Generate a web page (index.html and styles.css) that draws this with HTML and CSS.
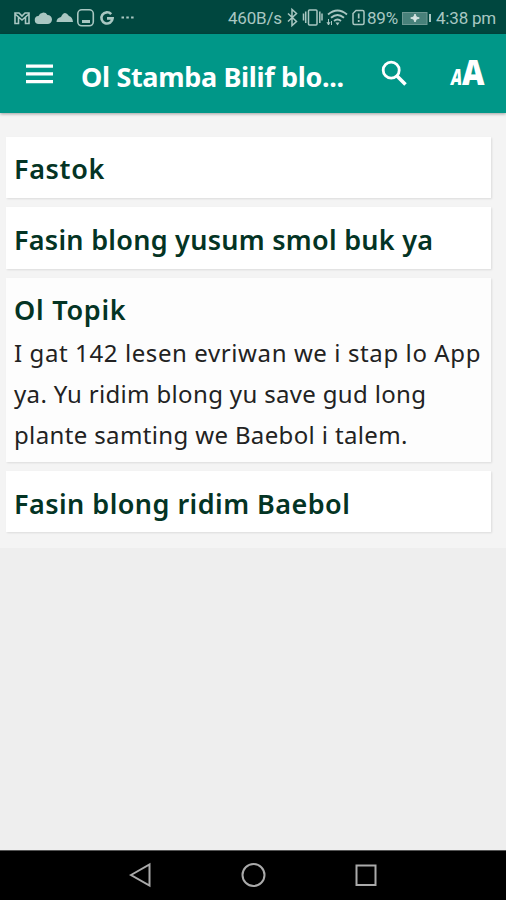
FILE: index.html
```html
<!DOCTYPE html>
<html lang="bi">
<head>
<meta charset="utf-8">
<title>Ol Stamba Bilif</title>
<link rel="stylesheet" href="styles.css">
</head>
<body>
<div class="status">
  <svg class="notices" width="124" height="34" viewBox="14 0 124 34" fill="none" stroke="#a9c7c2" stroke-width="1.6">
    <path d="M15 13h4l3 3 3-3h4v10.500h-3.500v-6.500l-3.500 3-3.500-3v6.500h-3.500zM15 14l7 6 7-6"/>
    <path d="M39 24a4 4 0 0 1-.5-8a5 5 0 0 1 9-1a4.500 4.500 0 0 1 0 9z" fill="#a9c7c2" stroke="none"/>
    <path d="M56.500 22q0-4 4.500-5q3.500-7.500 8-1q3.500 1 4 6z" fill="#a9c7c2" stroke="none"/>
    <rect x="77.800" y="9.800" width="15.500" height="16" rx="4"/>
    <path d="M82 21.500h8" stroke-width="3"/>
    <path d="M111.200 14.200a5.600 5.600 0 1 0 1.400 4.200h-5.600" stroke-width="2.600"/>
    <path d="M121.500 17.500h2.500M126.300 17.500h2.500M131.100 17.500h2.500" stroke-width="2"/>
  </svg>
  <span class="speed">460B/s</span>
  <svg class="signals" width="80" height="34" viewBox="286 0 80 34" fill="none" stroke="#a9c7c2" stroke-width="1.500">
    <path d="M288 13.500l8.500 8-4.500 4v-16l4.500 4-8.500 8"/>
    <rect x="308.500" y="10" width="8.500" height="15" rx="1"/>
    <path d="M305.700 11.500v11.500M319.800 11.500v11.500M303.500 13.500v7M322 13.500v7"/>
    <path d="M328 14.500q9.500-8 19 0M331 17.800q6.500-5.500 13 0M334 21q3.500-3 7 0" stroke-width="1.800"/>
    <path d="M335.500 22.500h4l-2 3z" fill="#a9c7c2" stroke="none"/>
    <path d="M328.500 25v-6M331.500 25v-4M327 22l1.500 3 1.500-3" stroke-width="1"/>
    <path d="M356 10.500h6.500q1.500 0 1.500 1.500v11q0 1.500-1.500 1.500h-8q-1.500 0-1.500-1.500v-9.500z"/>
    <path d="M358.700 13.500v5M358.700 20v2" stroke-width="1.700"/>
  </svg>
  <span class="percent">89%</span>
  <svg class="battery" width="30" height="34" viewBox="402 0 30 34">
    <rect x="402.500" y="12.500" width="24.500" height="12" fill="#48817a" stroke="#6d9993"/>
    <path d="M429 14h2v8h-2z" fill="#a9c7c2"/>
    <path d="M415 14l1.300 3 3 1-3 1.200-1.300 2.800-1.300-2.800-3-1.200 3-1z" fill="#d6e5e2" stroke="#d6e5e2"/>
  </svg>
  <span class="time">4:38 pm</span>
</div>
<header class="bar">
  <svg class="menu" width="27" height="20" viewBox="0 0 27 20" fill="#fff"><path d="M0 .5h27v3.300H0zM0 8.200h27v3.300H0zM0 16h27v3.300H0z"/></svg>
  <h1 class="title">Ol Stamba Bilif blo...</h1>
  <svg class="search" width="27" height="27" viewBox="0 0 27 27" fill="none" stroke="#fff" stroke-width="2.800"><circle cx="10.200" cy="10.200" r="8"/><path d="M16 16l8.500 8.500" stroke-width="3.500"/></svg>
  <div class="sizes"><span class="small">A</span><span class="large">A</span></div>
</header>
<main class="list">
  <section class="card"><h2><span class="h-a">Fastok</span></h2></section>
  <section class="card second"><h2><span class="h-b">Fasin blong yusum smol buk ya</span></h2></section>
  <section class="card topic">
    <h2><span class="h-c">Ol Topik</span></h2>
    <p><span class="l-a">I gat 142 lesen evriwan we i stap lo App</span><br><span class="l-b">ya. Yu ridim blong yu save gud long</span><br><span class="l-c">plante samting we Baebol i talem.</span></p>
  </section>
  <section class="card last"><h2><span class="h-d">Fasin blong ridim Baebol</span></h2></section>
</main>
<nav class="nav">
  <svg width="260" height="49" viewBox="124 851 260 49" fill="none" stroke="#aaa" stroke-width="2"><path d="M132 875l18.500-10.500v21z"/><circle cx="254.500" cy="875" r="11"/><rect x="357.500" y="865.500" width="19" height="19.500"/></svg>
</nav>
</body>
</html>
```
FILE: styles.css
```css
* { box-sizing: border-box; }
body {
  margin: 0;
  height: 900px;
  display: flex;
  flex-direction: column;
  background: #eee;
  font-family: "Noto Sans", sans-serif;
  overflow: hidden;
}
svg { display: block; flex: none; }
.status {
  flex: none;
  height: 34px;
  display: flex;
  align-items: center;
  padding-left: 14px;
  background: #00473f;
  color: #a9c7c2;
  font: 17px/34px Roboto, sans-serif;
  letter-spacing: -.2px;
  white-space: nowrap;
}
.status span { flex: none; padding-top: 2px; }
.speed { width: 58px; margin-left: 90px; }
.percent { width: 35px; margin-left: 1px; }
.time { margin-left: 4px; }
.bar {
  flex: none;
  height: 79px;
  display: flex;
  align-items: center;
  padding-left: 26px;
  background: #009788;
  color: #fff;
  box-shadow: 0 1px 3px rgba(0,0,0,.35);
  z-index: 1;
}
.title {
  width: 300px;
  margin: 6px 0 0 28px;
  font-size: 27px;
  line-height: 40px;
  font-weight: 700;
  letter-spacing: -.33px;
  white-space: nowrap;
}
.search { margin-top: -1px; }
.sizes {
  display: flex;
  align-items: baseline;
  margin-left: 43px;
  line-height: 36px;
  font-weight: 900;
}
.small {
  width: 11px;
  font-size: 23px;
  font-style: italic;
  transform: scaleX(.72);
  transform-origin: left;
}
.large {
  font-size: 36px;
  transform: scaleX(.86);
  transform-origin: left;
}
.list {
  flex: none;
  height: 435px;
  padding: 24px 15px 0 6px;
  background: #f4f4f4;
  display: flex;
  flex-direction: column;
  gap: 9px;
}
.card {
  height: 61px;
  padding: 11px 8px 0;
  background: #fff;
  box-shadow: 1px 1px 2px rgba(0,0,0,.1);
}
.second { height: 62px; padding-top: 12px; }
.topic { height: 184px; background: #fdfdfd; }
.last { padding-top: 12px; }
h2 {
  margin: 0;
  color: #043424;
  font-size: 27px;
  line-height: 42px;
  font-weight: 600;
  white-space: nowrap;
}
.h-a { letter-spacing: .65px; }
.h-b { letter-spacing: .27px; }
.h-c { letter-spacing: .75px; }
.h-d { letter-spacing: .46px; }
p {
  margin: 1px 0 0;
  color: #222;
  font-size: 24px;
  line-height: 41px;
  white-space: nowrap;
}
.l-a { letter-spacing: .6px; }
.l-b { letter-spacing: .34px; }
.l-c { letter-spacing: .36px; }
.nav {
  flex: none;
  height: 50px;
  margin-top: auto;
  display: flex;
  justify-content: center;
  background: #000;
  border-top: 1px solid #555;
}
```
